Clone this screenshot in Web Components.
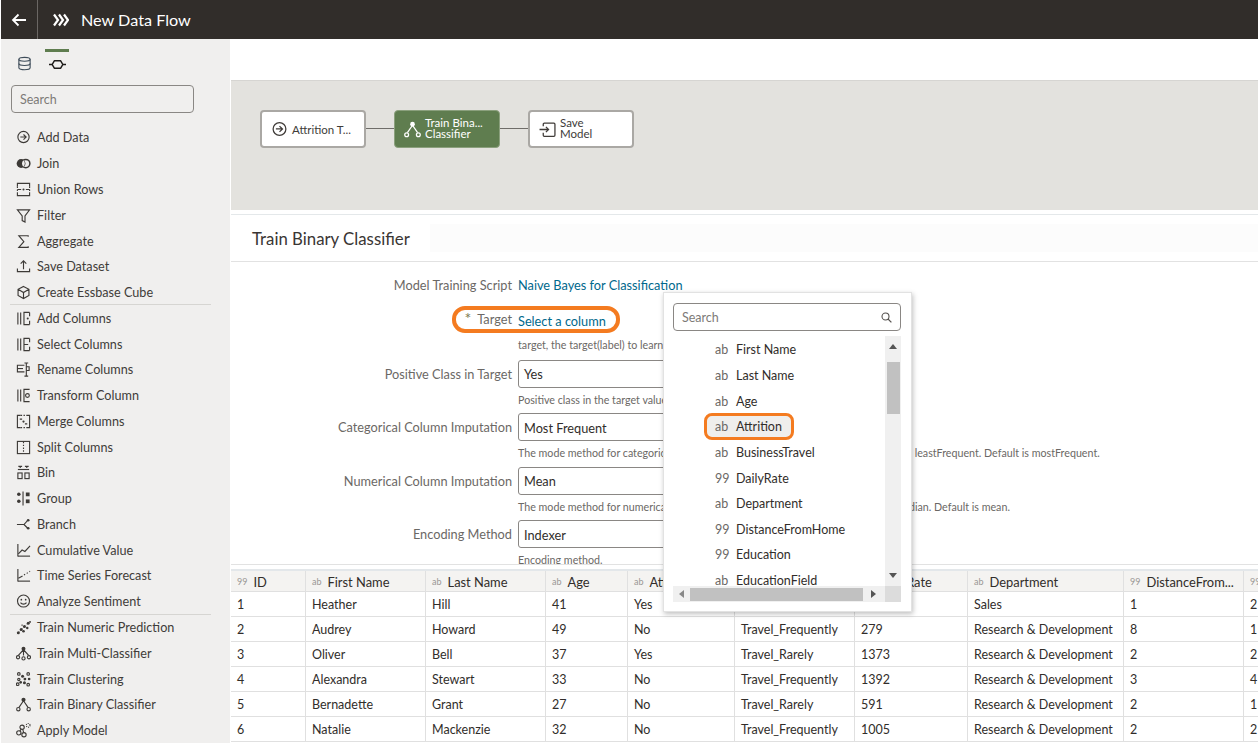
<!DOCTYPE html>
<html lang="en">
<head>
<meta charset="utf-8">
<title>New Data Flow</title>
<style>
  html, body { margin: 0; padding: 0; background: #fff; overflow: hidden; }
  body { font-family: "Lato", "Open Sans", sans-serif; color: #312d2a; }
</style>
</head>
<body>
<app-shell></app-shell>

<script>
// Icons for the step palette. All are drawn on a 16x16 box.
const S = 'fill="none" stroke="currentColor" stroke-width="1.2"';
const ICONS = {
  addData: `<circle cx="8" cy="7.5" r="6" ${S} stroke-width="1.3"/><path d="M4.6 7.5h6M8 4.8l2.8 2.7L8 10.2" ${S} stroke-width="1.5"/>`,
  join: `<circle cx="5.4" cy="8" r="4.7" fill="currentColor"/><circle cx="10.4" cy="8" r="4.4" fill="none" stroke="currentColor" stroke-width="1.6"/><path d="M7.9 4.6a4.6 4.6 0 0 1 0 6.8a4.6 4.6 0 0 1 0-6.8z" fill="#f0efee"/>`,
  union: `<path d="M1.5 5V1.5h13V5M1.5 11v3.5h13V11" ${S} stroke="#6b5a46" stroke-width="1.3"/><path d="M1.5 8h4M10.5 8h4" ${S}/><circle cx="8" cy="8" r="1.1" fill="currentColor"/><path d="M1.5 5v6M14.5 5v6" ${S} stroke-dasharray="1.5 1.5"/>`,
  filter: `<path d="M1.5 2h13L9.6 8.5V15l-3-1.6V8.5z" ${S}/>`,
  aggregate: `<path d="M13 3V1.8H3l5.4 6.4L3 14.2h10V13" ${S} stroke-width="1.3"/>`,
  save: `<path d="M8 11V2.2M5 5l3-3 3 3" ${S} stroke-width="1.4"/><path d="M1.5 10v3.5h13V10" ${S} stroke="#77736f" stroke-width="1.5"/>`,
  cube: `<path d="M8 1.5l5.8 3v6.6L8 14.5l-5.8-3.4V4.5zM2.2 4.5L8 8l5.8-3.5M8 8v6.5" ${S}/>`,
  addCols: `<path d="M2 1.5v13M5 1.5v13" ${S} stroke-width="1.4"/><path d="M14.5 1.5H8.5v13h6M14.5 1.5v4M14.5 10.5v4" ${S}/><circle cx="12.5" cy="8" r="1.1" fill="currentColor"/>`,
  selCols: `<path d="M2 1.5v13M5 1.5v13" ${S} stroke-width="1.4"/><path d="M14.5 1.5H8.5v13h6M14.5 1.5v4M14.5 10.5v4M9 8h4" ${S}/>`,
  rename: `<path d="M9 3.5H1.5v7H9" ${S} stroke="#77736f" stroke-width="1.5"/><path d="M1.5 7h6" ${S}/><path d="M9 1h4M11 1v14M9 15h4M11 5h3v4h-3" ${S}/>`,
  transform: `<path d="M2 1.5v13M5 1.5v13" ${S} stroke-width="1.4"/><path d="M14.5 1.5H8.5v13h6" ${S}/><circle cx="12.2" cy="8" r="2" ${S}/>`,
  merge: `<path d="M5 1.5H1.5v13H5M11 1.5h3.5v13H11" ${S} stroke-width="1.3"/><path d="M5 1.5h6M5 14.5h6" ${S} stroke-dasharray="1.5 1.5"/><path d="M4 5.5h2.5M9.5 10.5H12" ${S}/><circle cx="8" cy="8" r="1.2" fill="currentColor"/>`,
  split: `<rect x="1.5" y="1.5" width="13" height="13" ${S} stroke-width="1.3"/><path d="M8 2v12" ${S} stroke-dasharray="1.5 1.5"/>`,
  bin: `<path d="M2.5 1.5h4M9.5 1.5h4M4.5 1v2.2M11.5 1v2.2" ${S}/><path d="M2 4.8h12" ${S} stroke="#77736f"/><rect x="2" y="8.5" width="4.5" height="6" ${S}/><rect x="9.5" y="8.5" width="4.5" height="6" ${S}/>`,
  group: `<circle cx="3" cy="3.5" r="1.9" fill="currentColor"/><circle cx="3" cy="11" r="1.9" fill="currentColor"/><path d="M7.5 0.5v15" ${S}/><rect x="10.5" y="1.6" width="4" height="4" fill="currentColor"/><rect x="10.5" y="9" width="4" height="4" fill="currentColor"/>`,
  branch: `<path d="M1 8h7.5l4-4.5M8.5 8l4 4" ${S} stroke-width="1.4"/><circle cx="13" cy="3.5" r="1.4" fill="currentColor"/><circle cx="13" cy="12" r="1.4" fill="currentColor"/>`,
  cumulative: `<path d="M2 1v13.5" ${S} stroke-width="1.4"/><path d="M2 14h13" ${S} stroke="#77736f" stroke-width="1.6"/><path d="M2.5 11.5L6.5 7.5l3 1.5L15 3" ${S}/>`,
  forecast: `<path d="M2 1v13.5" ${S} stroke-width="1.4"/><path d="M2 14h13" ${S} stroke="#77736f" stroke-width="1.6"/><path d="M2.5 11L7 8.5" ${S}/><path d="M8.5 7.5L15 3.5" ${S} stroke-dasharray="1.4 2"/>`,
  sentiment: `<circle cx="8" cy="7.5" r="6.4" ${S}/><circle cx="5.7" cy="6" r=".9" fill="currentColor"/><circle cx="10.3" cy="6" r=".9" fill="currentColor"/><path d="M4.8 9.2c1.4 2.2 5 2.2 6.4 0" ${S}/>`,
  numeric: `<circle cx="2.5" cy="13.5" r="1.6" fill="currentColor"/><circle cx="5.5" cy="10" r="1.6" fill="currentColor"/><circle cx="8" cy="12" r="1.4" fill="currentColor"/><circle cx="9" cy="7" r="1.6" fill="currentColor"/><circle cx="12" cy="8.5" r="1.3" fill="currentColor"/><circle cx="13" cy="3.5" r="1.6" fill="currentColor"/><circle cx="15" cy="2" r="1" fill="currentColor"/><circle cx="6.5" cy="5.5" r="1" fill="#8a8784"/><path d="M1 15L15 1.5" stroke="currentColor" stroke-width=".6" stroke-dasharray="1 1.6"/>`,
  multi: `<circle cx="8" cy="2.8" r="2.1" fill="currentColor"/><path d="M8 4L2.5 10M8 4v6M8 4l5.5 6" ${S} stroke-width=".9"/><circle cx="2.2" cy="12" r="1.7" ${S} stroke="#77736f"/><circle cx="8" cy="13.2" r="1.7" ${S} stroke="#77736f"/><circle cx="13.8" cy="12" r="1.7" ${S} stroke="#77736f"/>`,
  cluster: `<circle cx="3" cy="2" r="1.4" ${S} stroke="#8a8784" stroke-width=".8"/><circle cx="13" cy="2" r="1.4" ${S} stroke="#8a8784" stroke-width=".8"/><circle cx="1.8" cy="13" r="1.4" ${S} stroke="#8a8784" stroke-width=".8"/><circle cx="3" cy="8" r="1.2" ${S} stroke="#8a8784" stroke-width=".8"/><circle cx="7" cy="4.5" r="1.6" fill="currentColor"/><circle cx="9.5" cy="7.5" r="1.5" fill="currentColor"/><circle cx="14" cy="7.5" r="1.4" fill="currentColor"/><circle cx="9" cy="11.5" r="1.6" fill="currentColor"/><circle cx="5" cy="11" r="1.4" fill="currentColor"/><circle cx="13" cy="13.5" r="1.4" ${S} stroke="#8a8784" stroke-width=".8"/>`,
  binary: `<circle cx="8" cy="3" r="2.2" fill="currentColor"/><path d="M8 4L3.2 11M8 4l4.8 7" ${S}/><circle cx="2.5" cy="13" r="1.8" ${S}/><circle cx="13.5" cy="13" r="1.8" ${S}/>`,
  apply: `<circle cx="6.5" cy="4.5" r="2.3" ${S} stroke-width="1.3"/><circle cx="3" cy="10.5" r="2.3" ${S} stroke-width="1.3"/><circle cx="8.5" cy="12.5" r="2.3" ${S} stroke-width="1.3"/><path d="M5.6 6.6l-1.6 2M7.2 6.8l1 3.4" ${S}/><circle cx="13" cy="2.5" r="2" ${S} stroke="#a5a3a0" stroke-width=".8" stroke-dasharray="1 1"/>`,
  database: `<path d="M2 3.5c0-2.8 12-2.8 12 0v9c0 2.8-12 2.8-12 0z" ${S} stroke-width="1.4"/><path d="M2 3.5c0 2.8 12 2.8 12 0M2 8c0 2.8 12 2.8 12 0" ${S} stroke-width="1.4"/>`,
  flow: `<path d="M3 8l2-3.5h6L13 8l-2 3.5H5z" fill="none" stroke="#1d1b19" stroke-width="1.4" stroke-linejoin="round"/><path d="M0 8h3M13 8h3" fill="none" stroke="#1d1b19" stroke-width="1.2"/>`,
  saveModel: `<path d="M4 5V3a1 1 0 0 1 1-1h9a1 1 0 0 1 1 1v10.5a1 1 0 0 1-1 1H5a1 1 0 0 1-1-1V11" ${S} stroke-width="1.4"/><path d="M.5 8h8.5M6.5 5.5L9 8l-2.5 2.5" ${S} stroke-width="1.3"/>`
};

function icon(name, size) {
  return `<svg width="${size}" height="${size}" viewBox="0 0 16 16" aria-hidden="true">${ICONS[name]}</svg>`;
}

// Dark bar on top of the page
class AppHeader extends HTMLElement {
  constructor() {
    super();
    this.attachShadow({ mode: 'open' }).innerHTML = `
      <style>
        :host { display: flex; align-items: center; height: 39px; background: #312d2a; color: #fff; }
        .back { width: 36px; height: 100%; display: flex; align-items: center; justify-content: center; border-right: 1px solid #6b6764; }
        .logo { margin-left: 15px; width: 16px; height: 14px; }
        h1 { margin: 0 0 0 12px; font-size: 16.2px; font-weight: 400; }
      </style>
      <div class="back">
        <svg width="16" height="14" viewBox="0 0 16 14"><path d="M15 7H2M7.5 1.5L2 7l5.5 5.5" fill="none" stroke="#fff" stroke-width="1.8"/></svg>
      </div>
      <svg class="logo" viewBox="0 0 16 14"><path d="M1 1.5L5 7l-4 5.5M6 1.5L10 7l-4 5.5M11 1.5L15 7l-4 5.5" fill="none" stroke="#fff" stroke-width="2.2"/></svg>
      <h1><slot></slot></h1>
    `;
  }
}
customElements.define('app-header', AppHeader);

// One step in the left palette
class PaletteItem extends HTMLElement {
  constructor() {
    super();
    this.attachShadow({ mode: 'open' }).innerHTML = `
      <style>
        :host { display: flex; align-items: center; height: 25.78px; padding-left: 15px; font-size: 12.65px; color: #403c39; white-space: nowrap; }
        svg { flex: none; margin-right: 6px; color: #3d3a37; }
      </style>
      ${icon(this.getAttribute('icon'), 15)}<span><slot></slot></span>
    `;
  }
}
customElements.define('palette-item', PaletteItem);

// Left side: tabs, search and the steps in groups
class SidePalette extends HTMLElement {
  constructor() {
    super();
    const groups = [
      [['addData', 'Add Data'], ['join', 'Join'], ['union', 'Union Rows'], ['filter', 'Filter'], ['aggregate', 'Aggregate'], ['save', 'Save Dataset'], ['cube', 'Create Essbase Cube']],
      [['addCols', 'Add Columns'], ['selCols', 'Select Columns'], ['rename', 'Rename Columns'], ['transform', 'Transform Column'], ['merge', 'Merge Columns'], ['split', 'Split Columns'], ['bin', 'Bin'], ['group', 'Group'], ['branch', 'Branch'], ['cumulative', 'Cumulative Value'], ['forecast', 'Time Series Forecast'], ['sentiment', 'Analyze Sentiment']],
      [['numeric', 'Train Numeric Prediction'], ['multi', 'Train Multi-Classifier'], ['cluster', 'Train Clustering'], ['binary', 'Train Binary Classifier'], ['apply', 'Apply Model']]
    ];
    const html = groups.map(g => `<div class="group">${g.map(([i, t]) => `<palette-item icon="${i}">${t}</palette-item>`).join('')}</div>`).join('');
    this.attachShadow({ mode: 'open' }).innerHTML = `
      <style>
        :host { display: block; background: #f0efee; overflow: hidden; }
        .tabs { display: flex; height: 36px; padding: 10px 0 0 14px; gap: 12px; color: #3f4d5a; }
        .tab { width: 24px; padding-top: 7px; display: flex; justify-content: center; box-sizing: border-box; }
        .tab.on { border-top: 3px solid #5f7d4f; padding-top: 4px; }
        .tabs .tab:first-child { width: 18px; }
        input { display: block; box-sizing: border-box; width: 183px; height: 28px; margin: 0 0 12.1px 10px; padding: 0 8px; background: transparent; border: 1px solid #8a8784; border-radius: 4px; font: 12.5px "Lato", sans-serif; color: #6b6865; }
        input::placeholder { color: #7d7a77; opacity: 1; }
        .group + .group { border-top: 1px solid #d6d5d2; margin: -1px 19px 0 9px; }
        .group + .group palette-item { margin-left: -9px; }
      </style>
      <div class="tabs">
        <div class="tab">${icon('database', 15)}</div>
        <div class="tab on">${icon('flow', 17)}</div>
      </div>
      <input placeholder="Search" aria-label="Search">
      ${html}
    `;
  }
}
customElements.define('side-palette', SidePalette);

// Node on the flow canvas
class FlowNode extends HTMLElement {
  constructor() {
    super();
    const active = this.hasAttribute('active');
    this.attachShadow({ mode: 'open' }).innerHTML = `
      <style>
        :host { display: flex; align-items: center; box-sizing: border-box; width: 106px; height: 38px; padding-left: 9px; gap: 4px;
          background: ${active ? '#5f7d4f' : '#fff'}; color: ${active ? '#fff' : '#403c39'};
          border: 2px solid ${active ? '#8ba07d' : '#aaa8a4'}; border-width: ${active ? '1px' : '2px'}; border-radius: 4px; font-size: 11.5px; line-height: 11px; white-space: nowrap; }
        :host([two]) span { padding-bottom: 3px; }
        svg { flex: none; }
      </style>
      ${icon(this.getAttribute('icon'), 17)}<span><slot></slot></span>
    `;
  }
}
customElements.define('flow-node', FlowNode);

// Grey canvas with the nodes joined by lines
class FlowCanvas extends HTMLElement {
  constructor() {
    super();
    this.attachShadow({ mode: 'open' }).innerHTML = `
      <style>
        :host { display: flex; align-items: flex-start; height: 130px; box-sizing: border-box; padding: 29px 0 0 29px; background: #e3e2de; border-top: 1px solid #d6d5d2; }
        ::slotted(i) { flex: none; width: 28px; height: 1px; margin-top: 18px; background: #6f6d69; }
      </style>
      <slot></slot>
    `;
  }
}
customElements.define('flow-canvas', FlowCanvas);

// Label on the left, control on the right, help text below
class FormRow extends HTMLElement {
  constructor() {
    super();
    const help = this.getAttribute('help');
    this.attachShadow({ mode: 'open' }).innerHTML = `
      <style>
        :host { display: block; position: relative; font-size: 12.75px; }
        .line { display: grid; grid-template-columns: 281px 1fr; column-gap: 6px; align-items: center; height: 28px; }
        label { text-align: right; color: #6b6865; white-space: nowrap; }
        .help { margin-left: 287px; height: 25.4px; padding-top: 4px; box-sizing: border-box; font-size: 10.7px; line-height: 16px; color: #6b6865; white-space: nowrap; }
        b { font-weight: 400; color: #7c7a4e; margin-right: 6px; font-size: 16px; line-height: 0; }
      </style>
      <div class="line">
        <label>${this.hasAttribute('required') ? '<b>*</b>' : ''}${this.getAttribute('label')}</label>
        <div><slot></slot></div>
      </div>
      ${help ? `<div class="help">${help}</div>` : ''}
      <slot name="over"></slot>
    `;
  }
}
customElements.define('form-row', FormRow);

// Read-only select box
class SelectBox extends HTMLElement {
  constructor() {
    super();
    this.attachShadow({ mode: 'open' }).innerHTML = `
      <style>
        :host { display: flex; align-items: center; box-sizing: border-box; width: 300px; height: 28px; padding: 1px 0 0 5px; border: 1px solid #8a8784; border-radius: 3px; font-size: 12.75px; color: #312d2a; }
      </style>
      <slot></slot>
    `;
  }
}
customElements.define('select-box', SelectBox);

// Panel below the canvas with the step's parameters
class StepPanel extends HTMLElement {
  constructor() {
    super();
    this.attachShadow({ mode: 'open' }).innerHTML = `
      <style>
        :host { display: block; height: 351px; margin-top: 4px; border-top: 1px solid #e4e8ea; box-sizing: border-box; overflow: hidden; }
        header { display: flex; align-items: center; height: 47px; box-sizing: border-box; border-bottom: 1px solid #e2e2e2; padding-left: 21px; }
        h2 { margin: 0; font-size: 16.8px; font-weight: 400; color: #3a3633; white-space: nowrap; }
        .blank { flex: 1; height: 28px; margin-left: 20px; background: #fcfcfc; }
        .form { height: 303px; box-sizing: border-box; padding-top: 9px; border-bottom: 1px solid #e2e2e2; overflow: hidden; }
      </style>
      <header><h2><slot name="title"></slot></h2><div class="blank"></div></header>
      <div class="form"><slot></slot></div>
    `;
  }
}
customElements.define('step-panel', StepPanel);

// Data preview table at the bottom
class DataGrid extends HTMLElement {
  constructor() {
    super();
    const cols = [
      ['99', 'ID', 75], ['ab', 'First Name', 120], ['ab', 'Last Name', 120], ['ab', 'Age', 82], ['ab', 'Attrition', 107],
      ['ab', 'BusinessTravel', 120], ['99', 'DailyRate', 113], ['ab', 'Department', 156], ['99', 'DistanceFrom...', 120], ['99', 'Education', 80]
    ];
    const rows = [
      ['1', 'Heather', 'Hill', '41', 'Yes', 'Travel_Rarely', '1102', 'Sales', '1', '2'],
      ['2', 'Audrey', 'Howard', '49', 'No', 'Travel_Frequently', '279', 'Research &amp; Development', '8', '1'],
      ['3', 'Oliver', 'Bell', '37', 'Yes', 'Travel_Rarely', '1373', 'Research &amp; Development', '2', '2'],
      ['4', 'Alexandra', 'Stewart', '33', 'No', 'Travel_Frequently', '1392', 'Research &amp; Development', '3', '4'],
      ['5', 'Bernadette', 'Grant', '27', 'No', 'Travel_Rarely', '591', 'Research &amp; Development', '2', '1'],
      ['6', 'Natalie', 'Mackenzie', '32', 'No', 'Travel_Frequently', '1005', 'Research &amp; Development', '2', '2']
    ];
    const head = cols.map(c => `<div class="th"><small>${c[0]}</small>${c[1]}</div>`).join('');
    const body = rows.map(r => r.map(v => `<div class="td">${v}</div>`).join('')).join('');
    this.attachShadow({ mode: 'open' }).innerHTML = `
      <style>
        :host { display: block; margin-top: 4px; border-top: 2px solid #e3e7ea; font-size: 12.5px; overflow: hidden; }
        .grid { display: grid; grid-template-columns: ${cols.map(c => c[2] + 'px').join(' ')}; grid-template-rows: 21px; grid-auto-rows: 25px; width: max-content; }
        .th, .td { box-sizing: border-box; display: flex; align-items: center; border-right: 1px solid #e0e0e0; border-bottom: 1px solid #e0e0e0; padding: 1px 0 0 6px; white-space: nowrap; overflow: hidden; color: #312d2a; }
        .th { background: #f4f3f1; font-size: 12.9px; }
        small { font-size: 9px; color: #9a9794; margin-right: 6px; }
      </style>
      <div class="grid">${head}${body}</div>
    `;
  }
}
customElements.define('data-grid', DataGrid);

// Popup with the column list and its scrollbars
class ColumnPicker extends HTMLElement {
  constructor() {
    super();
    const items = [
      ['ab', 'First Name'], ['ab', 'Last Name'], ['ab', 'Age'], ['ab', 'Attrition'], ['ab', 'BusinessTravel'],
      ['99', 'DailyRate'], ['ab', 'Department'], ['99', 'DistanceFromHome'], ['99', 'Education'], ['ab', 'EducationField']
    ];
    const list = items.map(([t, n]) => `<div class="item${n === 'Attrition' ? ' hit' : ''}"><span class="type">${t}</span>${n}</div>`).join('');
    this.attachShadow({ mode: 'open' }).innerHTML = `
      <style>
        :host { position: absolute; left: 663px; top: 292px; width: 249px; height: 320px; box-sizing: border-box; padding: 10px 10px 0 9px; background: #fff; border: 1px solid #e2e2e2; box-shadow: 1px 2px 5px rgba(0,0,0,.25); font-size: 12.5px; }
        .search { display: flex; align-items: center; justify-content: space-between; box-sizing: border-box; height: 28px; padding: 0 8px; border: 1px solid #8a8784; border-radius: 4px; color: #7d7a77; }
        .box { display: grid; grid-template-columns: 212px 16px; grid-template-rows: 250px 16px; margin-top: 5px; }
        .list { overflow: hidden; padding-top: 1px; }
        .item { display: flex; align-items: center; height: 25.65px; margin-left: 42px; color: #312d2a; box-sizing: border-box; }
        .type { width: 21px; color: #6b6865; }
        .item.hit { margin: -1px 0 -.35px 31px; width: 90px; padding-left: 8px; background: #efeeec; border: 3px solid #f47b20; border-radius: 8px; height: 27px; }
        .v { background: #f0f0f0; display: flex; flex-direction: column; align-items: center; }
        .thumb-v { width: 13px; height: 52px; margin-top: 15px; background: #c1c1c1; }
        .h { background: #f0f0f0; display: flex; align-items: center; }
        .thumb-h { width: 173px; height: 13px; margin-left: 6px; background: #c1c1c1; }
        .corner { background: #dcdcdc; }
        .up, .down, .left, .right { width: 0; height: 0; flex: none; border: 4px solid transparent; }
        .up { border-bottom: 5px solid #555; border-top: 0; margin-top: 8px; margin-bottom: -2px; }
        .down { border-top: 5px solid #555; border-bottom: 0; margin-top: auto; margin-bottom: 8px; }
        .left { border-right: 5px solid #888; border-left: 0; margin-left: 6px; }
        .right { border-left: 5px solid #555; border-right: 0; margin-left: 8px; }
      </style>
      <div class="search"><span>Search</span>
        <svg width="11" height="11" viewBox="0 0 11 11"><circle cx="4.5" cy="4.5" r="3.5" fill="none" stroke="#55514e" stroke-width="1.1"/><path d="M7 7l3.4 3.4" stroke="#55514e" stroke-width="1.2"/></svg>
      </div>
      <div class="box">
        <div class="list">${list}</div>
        <div class="v"><div class="up"></div><div class="thumb-v"></div><div class="down"></div></div>
        <div class="h"><div class="left"></div><div class="thumb-h"></div><div class="right"></div></div>
        <div class="corner"></div>
      </div>
    `;
  }
}
customElements.define('column-picker', ColumnPicker);

// Whole page
class AppShell extends HTMLElement {
  constructor() {
    super();
    this.attachShadow({ mode: 'open' }).innerHTML = `
      <style>
        :host { display: grid; position: relative; grid-template-columns: 229px 1fr; grid-template-rows: 39px 704px; width: 1258px; height: 743px; box-sizing: border-box; padding-left: 1px; overflow: hidden; font-family: "Lato", "Open Sans", sans-serif; }
        app-header { grid-column: 1 / 3; }
        main { padding-left: 1px; overflow: hidden; min-width: 0; }
        .band { height: 41px; }
        .link { color: #00688c; }
        .value { display: block; }
        .target { padding-top: 4px; }
        .tight { margin-bottom: 6px; }
        .ring { position: absolute; left: 221px; top: 1px; width: 168px; height: 27px; box-sizing: border-box; border: 4px solid #f47b20; border-radius: 13px; pointer-events: none; }
        form-row.gap { margin-bottom: 1.6px; }
      </style>
      <app-header>New Data Flow</app-header>
      <side-palette></side-palette>
      <main>
        <div class="band"></div>
        <flow-canvas>
          <flow-node icon="addData">Attrition T...</flow-node><i></i>
          <flow-node icon="binary" active two>Train Bina...<br>Classifier</flow-node><i></i>
          <flow-node icon="saveModel" two>Save<br>Model</flow-node>
        </flow-canvas>
        <step-panel>
          <span slot="title">Train Binary Classifier</span>
          <form-row class="tight" label="Model Training Script"><span class="link value">Naive Bayes for Classification</span></form-row>
          <form-row class="gap" label="Target" required help="target, the target(label) to learn...">
            <span class="link value target">Select a column</span>
            <div class="ring" slot="over"></div>
          </form-row>
          <form-row label="Positive Class in Target" help="Positive class in the target value."><select-box>Yes</select-box></form-row>
          <form-row label="Categorical Column Imputation" help="The mode method for categorical column imputation. Valid values are mostFrequent, leastFrequent. Default is mostFrequent."><select-box>Most Frequent</select-box></form-row>
          <form-row label="Numerical Column Imputation" help="The mode method for numerical columns imputation. Valid values are mean, and median. Default is mean."><select-box>Mean</select-box></form-row>
          <form-row label="Encoding Method" help="Encoding method."><select-box>Indexer</select-box></form-row>
        </step-panel>
        <data-grid></data-grid>
      </main>
      <column-picker></column-picker>
    `;
  }
}
customElements.define('app-shell', AppShell);
</script>
</body>
</html>
